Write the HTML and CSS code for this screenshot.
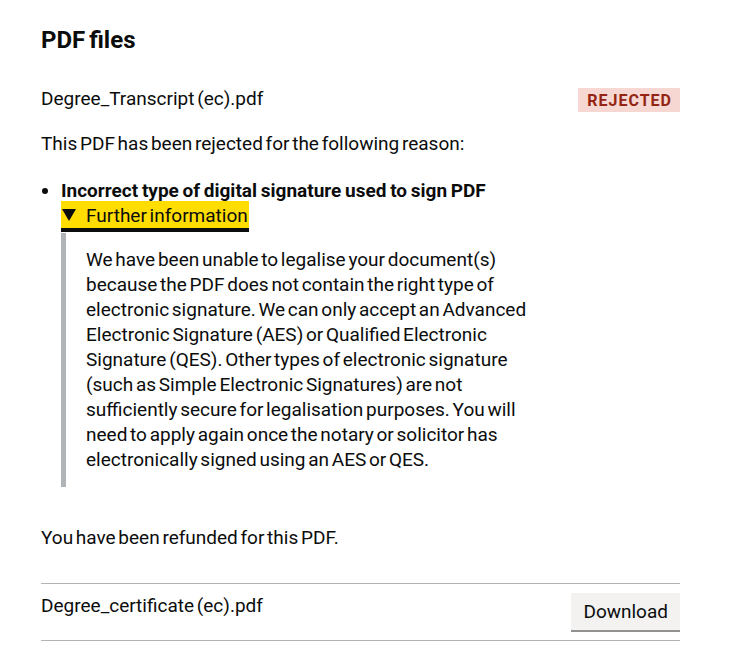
FILE: index.html
```html
<!DOCTYPE html>
<html lang="en">
<head>
    <meta charset="UTF-8">
    <meta name="viewport" content="width=device-width, initial-scale=1.0">
    <title>PDF files</title>
    <link rel="stylesheet" href="styles.css">
</head>
<body>
    <main class="page">
        <h2 class="heading">PDF files</h2>

        <div class="file-row">
            <span class="file-name">Degree_Transcript (ec).pdf</span>
            <strong class="tag tag--red">Rejected</strong>
        </div>

        <p class="body-text">This PDF has been rejected for the following reason:</p>

        <ul class="reasons">
            <li>
                <strong class="reason-title">Incorrect type of digital signature used to sign PDF</strong>
                <details class="details" open>
                    <summary class="details-summary">
                        <span class="details-summary-text">Further information</span>
                    </summary>
                    <div class="details-text">
                        We have been unable to legalise your document(s) because the PDF does not contain the right type of electronic signature. We can only accept an Advanced Electronic Signature (AES) or Qualified Electronic Signature (QES). Other types of electronic signature (such as Simple Electronic Signatures) are not sufficiently secure for legalisation purposes. You will need to apply again once the notary or solicitor has electronically signed using an AES or QES.
                    </div>
                </details>
            </li>
        </ul>

        <p class="body-text refund">You have been refunded for this PDF.</p>

        <div class="file-row file-row--bordered">
            <span class="file-name">Degree_certificate (ec).pdf</span>
            <button class="button button--secondary" type="button">Download</button>
        </div>
    </main>
</body>
</html>
```

FILE: styles.css
```css
body {
    margin: 0;
    font-family: Roboto, "Liberation Sans", Arial, sans-serif;
    color: #0b0c0c;
    background-color: #fff;
    word-spacing: -2px;
    -webkit-font-smoothing: antialiased;
}

.page {
    width: 639px;
    margin-left: 41px;
    padding-top: 25px;
}

.heading {
    margin: 0 0 31px;
    font-size: 24px;
    line-height: 30px;
    font-weight: 700;
}

.file-row {
    display: flex;
    justify-content: space-between;
    align-items: flex-start;
}

.file-name {
    font-size: 19px;
    line-height: 25px;
}

.tag {
    display: inline-block;
    margin-top: 2px;
    padding: 3px 8px 2px 9px;
    font-size: 16px;
    line-height: 19px;
    font-weight: 700;
    letter-spacing: 1px;
    text-transform: uppercase;
}

.tag--red {
    color: #942514;
    background-color: #f6d7d2;
}

.body-text {
    margin: 19px 0 0;
    font-size: 19px;
    line-height: 25px;
}

.reasons {
    margin: 22px 0 0;
    padding-left: 20px;
    font-size: 19px;
    line-height: 25px;
}

.reason-title {
    font-weight: 700;
    word-spacing: -1px;
}

.details {
    margin: 0;
}

.details-summary {
    display: inline-block;
    position: relative;
    padding-left: 25px;
    cursor: pointer;
    list-style: none;
    background-color: #fd0;
    box-shadow: 0 -2px #fd0, 0 4px #0b0c0c;
}

.details-summary::-webkit-details-marker {
    display: none;
}

.details-summary::before {
    content: "";
    position: absolute;
    top: 6px;
    left: 1px;
    border-style: solid;
    border-width: 12px 7px 0 7px;
    border-color: #0b0c0c transparent transparent transparent;
}

.details-summary-text {
    display: inline-block;
    padding-right: 1px;
}

.details-text {
    width: 446px;
    margin-top: 5px;
    padding: 14px 15px 15px 20px;
    border-left: 5px solid #b1b4b6;
}

.refund {
    margin-top: 38px;
}

.file-row--bordered {
    margin-top: 33px;
    padding: 9px 0 10px;
    border-top: 1px solid #b1b4b6;
    border-bottom: 1px solid #b1b4b6;
}

.button {
    font-family: inherit;
    font-size: 19px;
    line-height: 19px;
    color: #0b0c0c;
    border: 2px solid transparent;
    border-radius: 0;
    padding: 7px 10px 7px;
    cursor: pointer;
}

.button--secondary {
    background-color: #f3f2f1;
    box-shadow: 0 2px 0 #929191;
}
```
